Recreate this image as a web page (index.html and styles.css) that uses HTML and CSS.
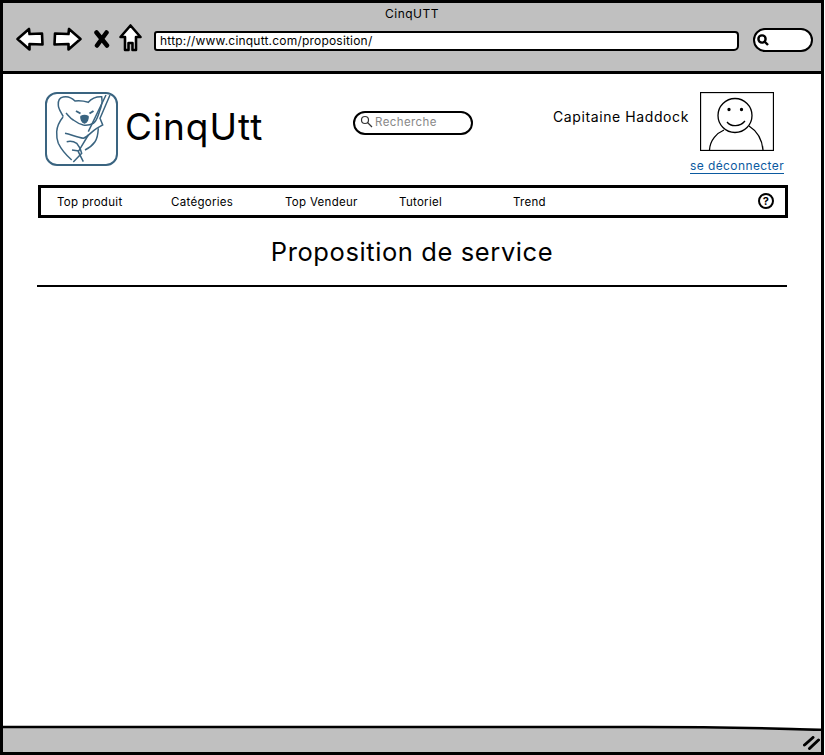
FILE: index.html
```html
<!DOCTYPE html>
<html lang="fr">
<head>
    <meta charset="UTF-8">
    <title>CinqUTT</title>
    <link rel="stylesheet" href="styles.css">
</head>
<body>
    <div class="window">
        <div class="toolbar">
            <div class="window-title">CinqUTT</div>
            <div class="toolbar-row">
                <svg class="tool-icon icon-back" width="28" height="24" viewBox="0 0 28 24"><path d="M1.5 12 L13 2 L13.5 7 L26 6.5 L26.5 17.5 L13.5 17 L13.5 22.5 Z"/></svg>
                <svg class="tool-icon icon-forward" width="29" height="24" viewBox="0 0 29 24"><path d="M27.5 12 L16 2 L15.5 7 L2 6.5 L1.5 17.5 L15.5 17 L15.5 22.5 Z"/></svg>
                <svg class="icon-stop" width="18" height="18" viewBox="0 0 18 18"><path d="M3.500 2.500 L14 15.500 M13.500 2.500 L4 15.500"/></svg>
                <svg class="tool-icon icon-home" width="23" height="28" viewBox="0 0 23 28"><path d="M11.5 1.5 L21.5 13 L17 13 L17 26 L13.5 26 L13.5 19 L9.5 19 L9.5 26 L6 26 L6 13 L1.5 13 Z"/></svg>
                <div class="url-bar">http://www.cinqutt.com/proposition/</div>
                <div class="browser-search">
                    <svg width="14" height="14" viewBox="0 0 14 14"><circle cx="6" cy="6" r="3.6"/><path d="M8.5 8.5 L12 12"/></svg>
                </div>
            </div>
        </div>

        <div class="content">
            <div class="site-header">
                <svg class="logo" width="73" height="74" viewBox="0 0 73 74">
                    <rect x="1" y="1" width="71" height="72" rx="11"/>
                    <path d="M18.300 24.700 C16 20 13.300 17 13.300 13 C13 8 15 5.500 18 5 C22 4 27 6 30 9 C34 8.500 39 9 43.300 10.300 C46 7 51 4.500 56.700 4.700 C57.500 8 57 12 56 15 L53.300 23 C52 27 50 30 48.300 31.300 C45 33 41.500 33.500 38.300 33 C34 32 31 30 28.300 28 C25 26 23 23 21 21"/>
                    <path d="M18 25 C14 30 12 35 11.700 39.700 C11.500 44 12 48 13.300 51.300 C16 57 21 63 26.700 68"/>
                    <path d="M61 3 L43.300 39.700 M65 3 L55.700 24.700 L55 26.300 L57.700 33 L51.700 36.300 C47 39 43 45 38.300 46.300 C32 45.500 26 42.500 20 41.300"/>
                    <path d="M53.300 36.300 C53 42 52 47 50 49.700 C47 54 44 56 40 58 M43.300 43 L33.300 59.700 L38.300 69.700"/>
                    <path d="M21.700 49.700 C25 49 29 49.500 31.700 51.300 C34 54 36 58 36.700 61.300 L28.300 70 M27 58 L34 59"/>
                    <path class="koala-nose" d="M36 24.500 C38 23.500 41 23.500 43 24.500 C43.500 27 42 30.500 39.500 31 C37 30.500 35.500 27 36 24.500 Z"/>
                    <path class="koala-eye" d="M31 19 L35.500 21.500 M48.500 19 L44.500 21.500"/>
                </svg>
                <div class="site-name">CinqUtt</div>
                <div class="site-search">
                    <svg width="13" height="13" viewBox="0 0 13 13"><circle cx="5" cy="5" r="3.500"/><path d="M7.500 7.500 L12 12"/></svg>
                    <span>Recherche</span>
                </div>
                <div class="user-box">
                    <div class="user-row">
                        <span class="user-name">Capitaine Haddock</span>
                        <svg class="avatar" width="74" height="59" viewBox="0 0 74 59">
                            <rect x="0.500" y="0.500" width="73" height="58"/>
                            <circle cx="35" cy="23.500" r="17"/>
                            <circle class="avatar-eye" cx="29" cy="17.500" r="1"/>
                            <circle class="avatar-eye" cx="41.500" cy="17.500" r="1"/>
                            <path d="M27 30 C31 35 40 35 45 29"/>
                            <path d="M9.500 58 C10 48 17 41 24 38 M49 34 C57 39 62 47 63 58"/>
                        </svg>
                    </div>
                    <a class="logout" href="#">se déconnecter</a>
                </div>
            </div>

            <div class="nav-bar">
                <a class="nav-item" href="#">Top produit</a>
                <a class="nav-item" href="#">Catégories</a>
                <a class="nav-item" href="#">Top Vendeur</a>
                <a class="nav-item" href="#">Tutoriel</a>
                <a class="nav-item" href="#">Trend</a>
                <div class="help-icon">?</div>
            </div>

            <h1 class="page-title">Proposition de service</h1>
            <div class="title-rule"></div>
        </div>

        <div class="status-bar">
            <svg class="status-line" width="819" height="6" viewBox="0 0 819 6"><path d="M0 2 L640 2 C700 2 760 3 819 5"/></svg>
            <svg class="resize-grip" width="17" height="14" viewBox="0 0 17 14"><path d="M1.500 9 L10 1.500 M6.500 12.500 L15.500 4"/></svg>
        </div>
    </div>
</body>
</html>
```

FILE: styles.css
```css
* {
    box-sizing: border-box;
}
body {
    width: 825px;
    margin: 0;
    padding: 0;
    background-color: #fff;
    color: #000;
    font-family: 'Inter', 'Open Sans', sans-serif;
}
a {
    color: inherit;
    text-decoration: none;
}
.window {
    display: flex;
    flex-direction: column;
    width: 824px;
    height: 755px;
    border: 3px solid #000;
}

/* browser chrome */
.toolbar {
    height: 71px;
    background-color: #c0c0c0;
    border-bottom: 3px solid #000;
}
.window-title {
    padding-top: 3px;
    text-align: center;
    font-size: 12px;
    line-height: 16px;
    letter-spacing: 0.5px;
}
.toolbar-row {
    display: flex;
    align-items: center;
    height: 30px;
    margin-top: 2px;
    padding-left: 13px;
}
.tool-icon path {
    fill: #fff;
    stroke: #000;
    stroke-width: 2.6;
    stroke-linejoin: round;
}
.icon-forward {
    margin-left: 9px;
}
.icon-stop {
    margin-left: 11px;
}
.icon-stop path {
    fill: none;
    stroke: #000;
    stroke-width: 4.5;
    stroke-linecap: round;
}
.icon-home {
    margin-left: 8px;
    margin-top: -2px;
}
.url-bar {
    width: 585px;
    height: 20px;
    margin-left: 12px;
    padding-left: 4px;
    margin-top: 4px;
    background-color: #fff;
    border: 2px solid #000;
    border-radius: 3px 4px 5px 3px;
    font-size: 12px;
    line-height: 15px;
    letter-spacing: 0.2px;
}
.browser-search {
    display: flex;
    align-items: center;
    width: 60px;
    height: 24px;
    margin-left: 14px;
    margin-top: 2px;
    padding-left: 1px;
    background-color: #fff;
    border: 2px solid #000;
    border-radius: 12px;
}
.browser-search circle, .browser-search path {
    fill: none;
    stroke: #000;
    stroke-width: 2.4;
}

/* page */
.content {
    flex: 1;
    padding: 0 34px;
    background-color: #fff;
}
.site-header {
    display: flex;
    height: 111px;
    padding-top: 18px;
}
.logo {
    flex: none;
    margin-left: 8px;
}
.logo rect, .logo path {
    fill: none;
    stroke: #3a6480;
    stroke-width: 1.5;
}
.logo rect {
    stroke-width: 2;
}
.logo .koala-nose {
    fill: #3a6480;
}
.logo .koala-eye {
    stroke-width: 2;
}
.site-name {
    width: 228px;
    margin-left: 7px;
    padding-top: 11px;
    font-size: 37px;
    line-height: 48px;
    letter-spacing: 1px;
}
.site-search {
    display: flex;
    align-items: center;
    gap: 2px;
    flex: none;
    width: 120px;
    height: 24px;
    margin-top: 19px;
    padding-left: 5px;
    padding-bottom: 3px;
    border: 2px solid #000;
    border-radius: 12px;
    color: #888;
    font-size: 11.5px;
    letter-spacing: 0.4px;
}
.site-search circle, .site-search path {
    fill: none;
    stroke: #333;
    stroke-width: 1.2;
}
.user-box {
    flex: none;
    width: 231px;
    margin-left: 81px;
}
.user-row {
    display: flex;
    justify-content: flex-end;
    gap: 11px;
    padding-right: 11px;
}
.user-name {
    margin-top: 16px;
    font-size: 14px;
    line-height: 18px;
    letter-spacing: 0.6px;
    white-space: nowrap;
}
.avatar {
    flex: none;
}
.avatar rect, .avatar circle, .avatar path {
    fill: none;
    stroke: #000;
    stroke-width: 1.300;
}
.avatar .avatar-eye {
    fill: #000;
}
.logout {
    display: block;
    width: 94px;
    margin-top: 8px;
    margin-left: 136px;
    border-bottom: 1px solid #0b5aa0;
    color: #0b5aa0;
    font-size: 12px;
    line-height: 14px;
    letter-spacing: 0.4px;
    white-space: nowrap;
}
.nav-bar {
    display: flex;
    align-items: center;
    width: 750px;
    height: 33px;
    margin-left: 1px;
    padding-left: 16px;
    padding-top: 1px;
    border: 3px solid #000;
    font-size: 11.5px;
    letter-spacing: 0.3px;
}
.nav-item {
    width: 114px;
}
.help-icon {
    width: 16px;
    height: 16px;
    margin-left: auto;
    margin-right: 11px;
    margin-top: -3px;
    border: 2px solid #000;
    border-radius: 50%;
    text-align: center;
    font-size: 11px;
    font-weight: bold;
    line-height: 12px;
}
.page-title {
    margin: 18px 0 0;
    font-size: 25.5px;
    font-weight: normal;
    line-height: 32px;
    text-align: center;
    letter-spacing: 0.6px;
}
.title-rule {
    width: 750px;
    height: 1.5px;
    margin-top: 17px;
    background-color: #000;
}

/* bottom bar */
.status-bar {
    position: relative;
    height: 24px;
    background-color: #c0c0c0;
}
.status-line {
    position: absolute;
    left: 0;
    top: -3px;
}
.status-line path {
    fill: none;
    stroke: #000;
    stroke-width: 2.500;
}
.resize-grip {
    position: absolute;
    right: 1px;
    bottom: 2px;
}
.resize-grip path {
    fill: none;
    stroke: #000;
    stroke-width: 3;
    stroke-linecap: round;
}
```
